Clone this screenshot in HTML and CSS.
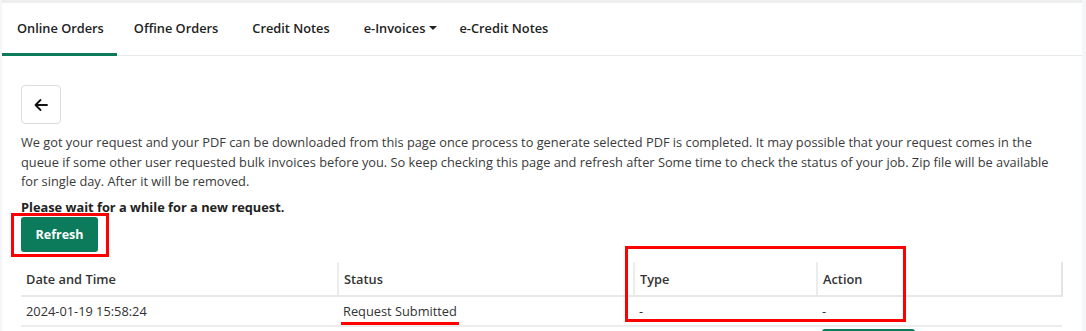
FILE: index.html
```html
<!DOCTYPE html>
<html lang="en">
<head>
    <meta charset="UTF-8">
    <meta name="viewport" content="width=device-width, initial-scale=1.0">
    <title>Bulk Download Requests</title>
    <link rel="stylesheet" href="styles.css">
</head>
<body>
    <div class="panel">
        <div class="tabs">
            <a href="#" class="tab active">Online Orders</a>
            <a href="#" class="tab">Offine Orders</a>
            <a href="#" class="tab">Credit Notes</a>
            <a href="#" class="tab dropdown">e-Invoices <span class="caret"></span></a>
            <a href="#" class="tab">e-Credit Notes</a>
        </div>

        <div class="content">
            <button class="back-btn" type="button">
                <svg width="16" height="16" viewBox="0 0 16 16">
                    <path d="M14 8H2.5M7.5 3 2.5 8l5 5" fill="none" stroke="#111" stroke-width="1.8" stroke-linecap="round" stroke-linejoin="round"/>
                </svg>
            </button>

            <p class="info">We got your request and your PDF can be downloaded from this page once process to generate selected PDF is completed. It may possible that your request comes in the queue if some other user requested bulk invoices before you. So keep checking this page and refresh after Some time to check the status of your job. Zip file will be available for single day. After it will be removed.</p>

            <p class="wait">Please wait for a while for a new request.</p>

            <div class="refresh-wrap">
                <button class="refresh-btn" type="button">Refresh</button>
                <span class="mark mark-refresh"></span>
            </div>

            <div class="table-wrap">
                <table>
                    <thead>
                        <tr>
                            <th class="col-date">Date and Time</th>
                            <th class="col-status">Status</th>
                            <th class="col-type">Type</th>
                            <th class="col-action">Action</th>
                        </tr>
                    </thead>
                    <tbody>
                        <tr>
                            <td>2024-01-19 15:58:24</td>
                            <td><span class="status">Request Submitted<span class="mark mark-line"></span></span></td>
                            <td>-</td>
                            <td>-</td>
                        </tr>
                        <tr class="done-row">
                            <td></td>
                            <td></td>
                            <td></td>
                            <td class="action-cell"><button class="download-btn" type="button" aria-label="Download"></button></td>
                        </tr>
                    </tbody>
                </table>
                <span class="mark mark-cols"></span>
            </div>
        </div>
    </div>
</body>
</html>
```

FILE: styles.css
```css
body {
    margin: 0;
    font-family: "Open Sans", Arial, sans-serif;
    font-size: 12.8px;
    color: #333;
    background-color: #f5f6fa;
    overflow: hidden;
}

.panel {
    background-color: #fff;
    width: 1080px;
    margin-left: 2px;
    border-top: 3px solid #eeeeee;
    min-height: 420px;
}

.tabs {
    display: flex;
    align-items: stretch;
    height: 52px;
    border-bottom: 1px solid #e8e8e8;
}

.tab {
    display: flex;
    align-items: center;
    padding: 0 17px;
    color: #222;
    font-weight: 600;
    text-decoration: none;
    border-bottom: 3px solid transparent;
    margin-bottom: -1px;
}

.tab.active {
    padding: 0 13px 0 15px;
    border-bottom-color: #0b7b5b;
}

.tab.dropdown {
    padding-right: 5px;
}

.caret {
    display: inline-block;
    margin-left: 4px;
    border-left: 4px solid transparent;
    border-right: 4px solid transparent;
    border-top: 4px solid #222;
}

.content {
    padding: 29px 17px 0 19px;
}

.back-btn {
    width: 40px;
    height: 39px;
    display: flex;
    align-items: center;
    justify-content: center;
    background-color: #fff;
    border: 1px solid #dcdcdc;
    border-radius: 4px;
    padding: 0;
}

.info {
    margin: 9px 0 0;
    max-width: 1044px;
    line-height: 19.5px;
    color: #3a3a3a;
}

.wait {
    margin: 6px 0 0;
    line-height: 19.5px;
    font-weight: 700;
    color: #222;
}

.refresh-wrap {
    position: relative;
    width: 77px;
}

.refresh-btn {
    width: 77px;
    height: 35px;
    background-color: #0b7b5b;
    color: #fff;
    border: none;
    border-radius: 3px;
    font-family: inherit;
    font-size: 12.5px;
    font-weight: 700;
}

.mark {
    position: absolute;
    pointer-events: none;
}

.mark-refresh {
    left: -10px;
    top: -4px;
    width: 92px;
    height: 38px;
    border: 3px solid #f00;
}

.table-wrap {
    position: relative;
    margin-top: 10px;
}

table {
    width: 1042px;
    border-collapse: collapse;
    table-layout: fixed;
}

th, td {
    text-align: left;
    padding: 0 5px;
}

th {
    height: 33px;
    font-weight: 600;
    color: #333;
    border-left: 2px solid #ececec;
    border-bottom: 2px solid #e6e8ec;
}

th:first-child {
    border-left: none;
}

th:last-child {
    border-right: 2px solid #e4e4e4;
}

td {
    height: 28px;
    color: #333;
    border-bottom: 2px solid #ececec;
}

.done-row td {
    height: 60px;
}

.done-row .action-cell {
    vertical-align: top;
    padding-top: 2px;
}

.col-date { width: 306px; }
.col-status { width: 284px; }
.col-type { width: 171px; }

.status {
    position: relative;
    display: inline-block;
}

.mark-line {
    left: -2px;
    right: -2px;
    bottom: -5px;
    height: 3px;
    background-color: #f00;
}

.mark-cols {
    left: 604px;
    top: -16px;
    width: 275px;
    height: 70px;
    border: 3px solid #f00;
}

.download-btn {
    width: 93px;
    height: 40px;
    background-color: #0b7b5b;
    border: none;
    border-radius: 3px;
}
```
